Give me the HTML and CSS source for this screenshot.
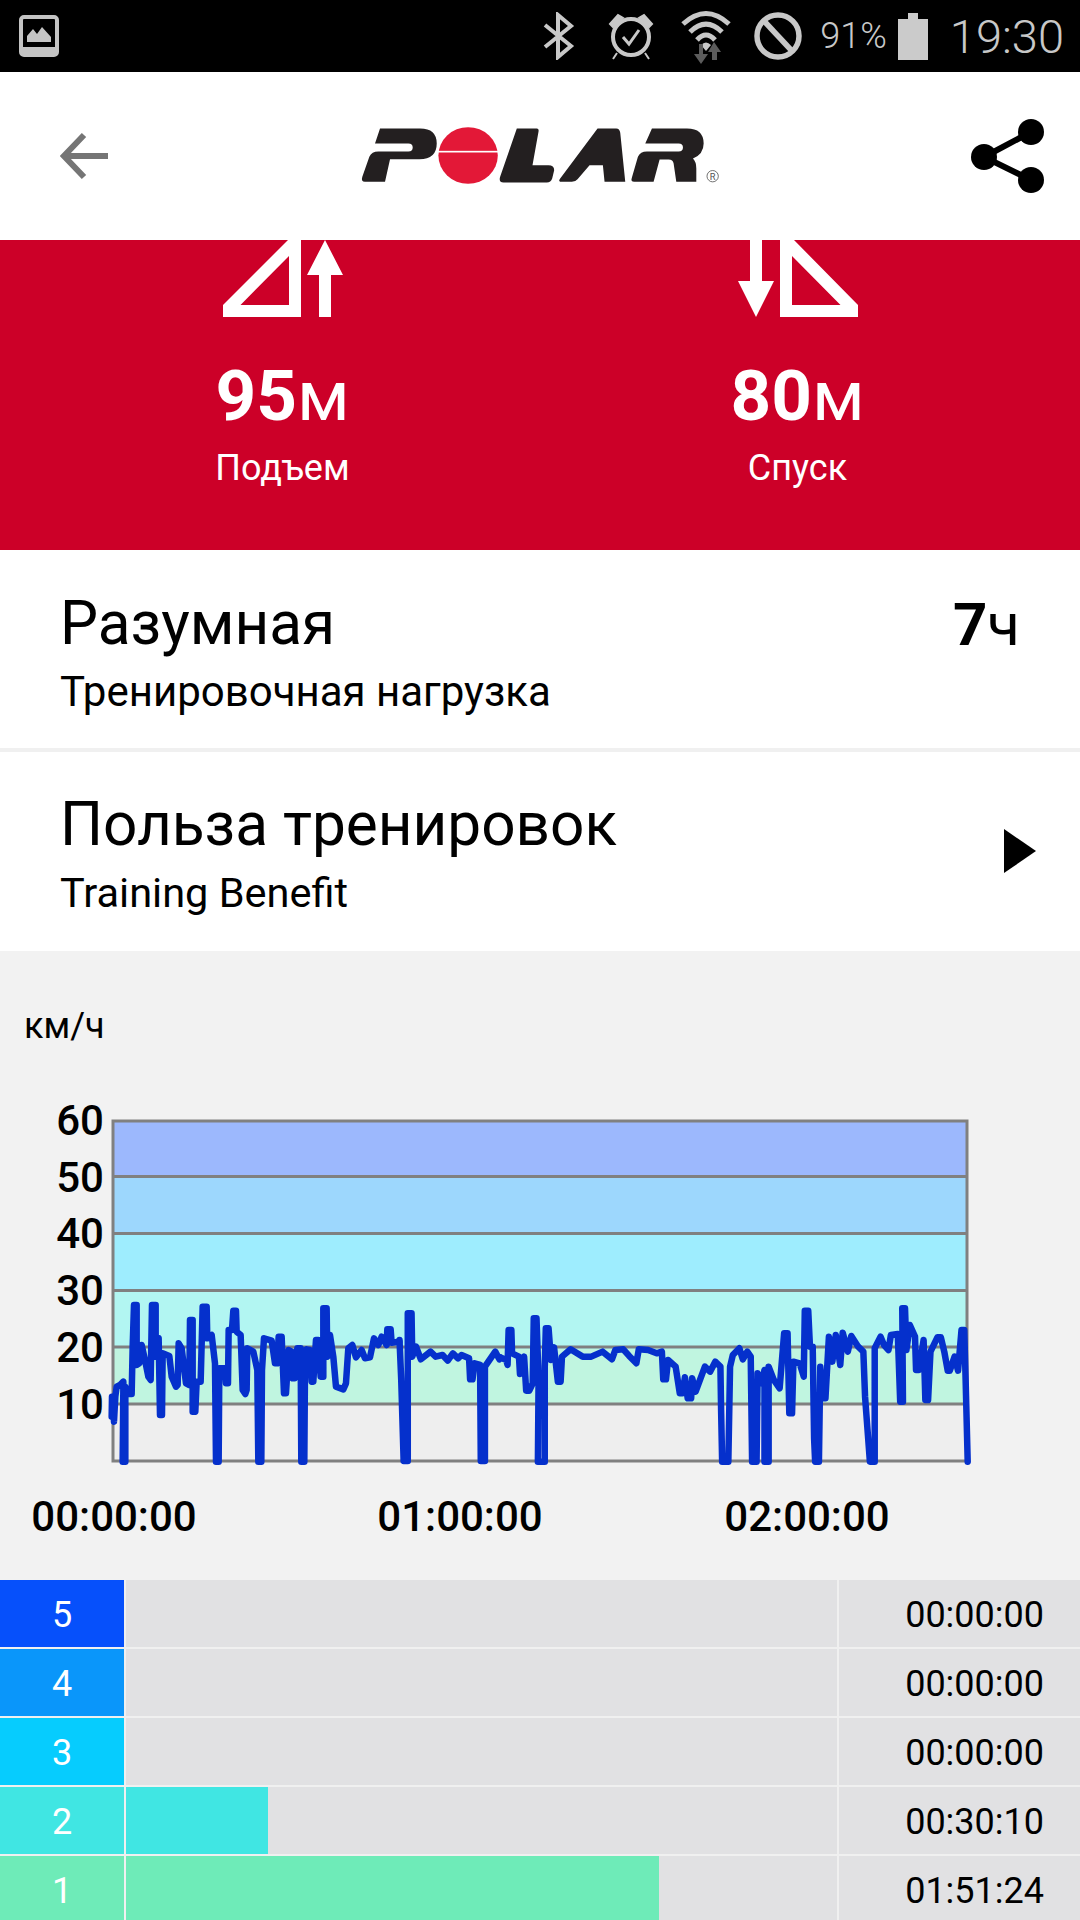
FILE: index.html
```html
<!DOCTYPE html>
<html lang="en">
<head>
  <meta charset="UTF-8" />
  <meta name="viewport" content="width=device-width, initial-scale=1.0"/>
  <title>Polar</title>
  <link rel="stylesheet" href="styles.css">
</head>
<body>
  <div class="statusbar">
    <svg class="ic-gallery" viewBox="0 0 40 42" width="40" height="42">
      <rect x="2" y="2" width="36" height="38" rx="3" fill="none" stroke="#c4c4c4" stroke-width="4"/>
      <rect x="2" y="32" width="36" height="8" fill="#c4c4c4"/>
      <path d="M8 27 V21 L14 14 L18 19 L23 12 L32 22 V27 Z" fill="#c4c4c4"/>
    </svg>
    <div class="status-right">
      <svg class="ic-bt" viewBox="0 0 32 48" width="32" height="48">
        <path d="M2 13 L28 34 L15 45 V3 L28 14 L2 35" fill="none" stroke="#c8c8c8" stroke-width="4"/>
      </svg>
      <svg class="ic-alarm" viewBox="0 0 46 48" width="46" height="48">
        <circle cx="23" cy="25" r="18" fill="none" stroke="#c8c8c8" stroke-width="4"/>
        <path d="M2 12 L10 3 L15 6 L5 15 Z M44 12 L36 3 L31 6 L41 15 Z M9 41 L5 47 M37 41 L41 47" fill="#c8c8c8" stroke="#c8c8c8" stroke-width="2"/>
        <path d="M15 25 L21 32 L31 18" fill="none" stroke="#c8c8c8" stroke-width="3"/>
      </svg>
      <svg class="ic-wifi" viewBox="0 0 50 54" width="50" height="54">
        <path d="M2 14 Q25 -7 48 14 M9 22 Q25 6 41 22 M16 30 Q25 20 34 30" fill="none" stroke="#c8c8c8" stroke-width="5"/>
        <path d="M20 35 L25 41 L30 35 Q25 30 20 35 Z" fill="#c8c8c8"/>
        <path d="M20 54 L13 44 H18 V34 H22 V44 H27 Z M33 32 L40 42 H36 V50 H31 V42 H27 Z" fill="#5c5c5c"/>
      </svg>
      <svg class="ic-block" viewBox="0 0 48 48" width="48" height="48">
        <circle cx="24" cy="24" r="21" fill="none" stroke="#c8c8c8" stroke-width="5.5"/>
        <path d="M10 9 L38 39" stroke="#c8c8c8" stroke-width="5.5"/>
      </svg>
      <span class="battery-pct">91%</span>
      <svg class="ic-battery" viewBox="0 0 30 47" width="30" height="47">
        <path d="M10 0 H20 V6 H30 V47 H0 V6 H10 Z" fill="#cbcbcb"/>
      </svg>
      <span class="clock">19:30</span>
    </div>
  </div>

  <div class="topbar">
    <svg class="ic-back" viewBox="0 0 48 48" width="48" height="48">
      <path d="M24 3 L4 24 L24 45 M4 24 H48" fill="none" stroke="#757575" stroke-width="6"/>
    </svg>
    <svg class="logo" viewBox="60 45 1085 185" width="362" height="62">
      <path class="logo-black" d="M120 55 H240 Q290 55 290 100 Q290 147 238 147 H150 L135 215 H75 Q62 215 67 200 L88 140 Q95 124 115 124 H205 Q218 124 218 112 Q218 100 205 100 H105 Z"/>
      <ellipse class="logo-red" cx="384" cy="136" rx="89" ry="85"/>
      <rect x="290" y="122" width="190" height="5" fill="#fff"/>
      <path class="logo-black" d="M530 55 H590 Q597 55 595 65 L577 165 H625 Q642 165 642 180 L636 205 Q632 217 620 217 H490 Q475 217 480 200 Z"/>
      <path class="logo-black" d="M772 55 H828 Q838 55 840 68 L855 215 H793 L788 165 H748 L712 207 Q705 215 695 215 H665 Q652 215 660 205 Z"/>
      <path class="logo-black" d="M935 55 H1040 Q1090 55 1090 100 Q1090 132 1058 145 Q1068 155 1068 175 V215 H1008 L1000 160 Q998 148 985 148 H958 L940 215 H882 Q870 215 875 202 L893 140 Q900 124 920 124 H1015 Q1028 124 1028 112 Q1028 100 1015 100 H915 Z"/>
      <circle cx="1117" cy="198" r="17" fill="none" stroke="#555" stroke-width="2.5"/>
      <text class="logo-reg" x="1117" y="208">R</text>
    </svg>
    <svg class="ic-share" viewBox="0 0 74 74" width="74" height="74">
      <path d="M60 13 L13 38 L60 61" fill="none" stroke="#000" stroke-width="6"/>
      <circle cx="60" cy="13" r="13"/>
      <circle cx="13" cy="38" r="13"/>
      <circle cx="60" cy="61" r="13"/>
    </svg>
  </div>

  <div class="climb">
    <div class="stat">
      <svg viewBox="222 240 120 77" width="120" height="77">
        <path fill-rule="evenodd" d="M287 240 H300 V317 H222 V305 Z M288 256 L239.500 305 H288 Z" fill="#fff"/>
        <path d="M324 240 L342 275 H330 V317 H318 V275 H306 Z" fill="#fff"/>
      </svg>
      <div class="stat-value"><b>95</b>м</div>
      <div class="stat-label">Подъем</div>
    </div>
    <div class="stat">
      <svg viewBox="738 240 120 77" width="120" height="77">
        <path d="M750 240 H762 V281 H774 L756 317 L738 281 H750 Z" fill="#fff"/>
        <path fill-rule="evenodd" d="M780 240 H794 L858 305 V317 H780 Z M792 256 V305 H840.500 Z" fill="#fff"/>
      </svg>
      <div class="stat-value"><b>80</b>м</div>
      <div class="stat-label">Спуск</div>
    </div>
  </div>

  <div class="row">
    <div>
      <div class="row-title">Разумная</div>
      <div class="row-sub">Тренировочная нагрузка</div>
    </div>
    <div class="row-hours"><b>7</b>ч</div>
  </div>
  <div class="row row-second">
    <div>
      <div class="row-title">Польза тренировок</div>
      <div class="row-sub">Training Benefit</div>
    </div>
    <svg class="ic-play" viewBox="0 0 32 44" width="32" height="44"><path d="M0 0 L32 22 L0 44 Z"/></svg>
  </div>

  <div class="chart">
    <div class="chart-unit">км/ч</div>
    <svg class="chart-svg" viewBox="0 1046 1080 533" width="1080" height="533">
      <rect x="113" y="1121" width="854" height="57" fill="#9cb8fd"/>
      <rect x="113" y="1178" width="854" height="57" fill="#9dd7fd"/>
      <rect x="113" y="1235" width="854" height="57" fill="#9eedfe"/>
      <rect x="113" y="1292" width="854" height="57" fill="#b2f6f2"/>
      <rect x="113" y="1349" width="854" height="56" fill="#c0f5e0"/>
      <rect x="113" y="1405" width="854" height="56" fill="#eeeeee"/>
      <path class="grid" d="M113 1121 H967 V1461 H113 Z M113 1176.500 H967 M113 1233.500 H967 M113 1290.500 H967 M113 1347 H967 M113 1404 H967"/>

      <g class="ticks-y">
        <text x="104" y="1135">60</text>
        <text x="104" y="1192">50</text>
        <text x="104" y="1248">40</text>
        <text x="104" y="1305">30</text>
        <text x="104" y="1362">20</text>
        <text x="104" y="1419">10</text>
      </g>
      <g class="ticks-x">
        <text x="114" y="1531">00:00:00</text>
        <text x="460" y="1531">01:00:00</text>
        <text x="807" y="1531">02:00:00</text>
      </g>

      <g transform="translate(100 1270) scale(.3333)">
        <polyline class="speed" points="35,440 36,380 40,385 42,455 46,380 50,350 60,345 70,335 70,360 68,575 76,575 76,350 85,372 95,372 98,230 102,105 110,105 110,285 118,280 125,225 135,270 145,320 152,330 156,105 167,105 167,260 176,205 180,435 186,435 188,250 208,258 215,320 228,350 233,345 236,220 245,235 258,340 268,345 270,150 278,150 278,425 286,425 290,335 302,335 308,110 320,110 322,205 335,195 345,280 348,575 356,575 358,295 375,295 378,340 384,340 386,180 396,180 400,122 408,122 410,185 422,195 428,360 436,372 440,360 442,235 460,245 472,300 475,575 484,575 486,300 492,205 515,212 525,280 532,280 536,200 545,200 552,370 558,370 566,240 575,245 578,325 584,325 592,235 602,235 604,575 613,575 615,300 620,238 630,240 635,335 640,335 648,210 655,210 662,320 670,320 670,115 680,115 682,260 690,195 700,260 708,350 730,358 738,340 745,235 757,225 768,262 785,240 795,265 810,262 822,205 835,225 845,200 860,225 862,178 872,178 875,218 898,215"/>
      </g>
      <g transform="translate(0 1100) scale(.3444 .3333)">
        <polyline class="speed" points="1160,720 1165,840 1172,1083 1184,1083 1184,640 1195,640 1197,770 1208,740 1222,778 1250,755 1265,770 1285,765 1300,782 1315,760 1330,775 1340,765 1362,775 1365,838 1372,838 1378,790 1394,795 1396,1083 1408,1083 1408,800 1438,755 1450,778 1452,772"/>
      </g>
      <g transform="translate(500 1100) scale(.3444 .3333)">
        <polyline class="speed" points="0,772 18,780 22,795 25,690 33,690 35,760 55,770 58,822 70,770 76,872 85,872 95,850 98,655 106,655 112,840 110,1085 130,1085 130,800 133,685 141,685 148,780 157,742 168,845 176,845 180,770 205,748 240,770 265,770 298,755 325,778 335,750 358,748 375,768 396,790 403,748 430,750 455,760 470,755 474,838 482,838 488,780 510,800 522,880 530,880 537,832 545,895 555,895 558,835 568,875 595,800 610,815 625,785 640,800 642,930 645,1085 663,1085 668,800 676,765 695,745 705,778 718,755 728,770 732,1085 745,1085 748,820 760,850 768,810 768,1085 780,1085 780,800 795,840 812,865 825,700 835,700 840,940 848,940 852,785 870,790 882,830 885,632 895,632 900,740 908,740 912,1015 915,1085 926,1085 930,800 936,895 945,895 955,710 965,785 975,705 988,795 995,698 1010,755 1020,708 1040,740 1055,755 1060,890 1074,1085 1088,1085 1088,745 1105,710 1115,735 1128,750 1135,705 1155,702 1162,905 1170,905 1168,625 1176,625 1180,750 1190,675 1205,710 1208,810 1216,810 1230,720 1235,900 1243,900 1250,755 1270,712 1280,712 1290,755 1300,812 1306,812 1320,770 1330,812 1340,690 1348,690 1352,840 1358,1085"/>
      </g>
    </svg>
  </div>

  <div class="zones">
    <div class="zone">
      <div class="zone-num z5">5</div>
      <div class="zone-track"></div>
      <div class="zone-time">00:00:00</div>
    </div>
    <div class="zone">
      <div class="zone-num z4">4</div>
      <div class="zone-track"></div>
      <div class="zone-time">00:00:00</div>
    </div>
    <div class="zone">
      <div class="zone-num z3">3</div>
      <div class="zone-track"></div>
      <div class="zone-time">00:00:00</div>
    </div>
    <div class="zone">
      <div class="zone-num z2">2</div>
      <div class="zone-track"><div class="zone-bar z2" style="width: 20%"></div></div>
      <div class="zone-time">00:30:10</div>
    </div>
    <div class="zone">
      <div class="zone-num z1">1</div>
      <div class="zone-track"><div class="zone-bar z1" style="width: 75%"></div></div>
      <div class="zone-time">01:51:24</div>
    </div>
  </div>
</body>
</html>
```

FILE: styles.css
```css
:root {
  --status: #c8c8c8;
  --red: #cc0028;
  --chart-bg: #f2f2f2;
  --track: #e1e1e3;
  --line: #f0f0f0;
}

html, body {
  margin: 0;
  height: 1920px;
  overflow: hidden;
}

body {
  font-family: Roboto, sans-serif;
  background: #fff;
  color: #000;
}

svg {
  display: block;
}

/* Status bar */
.statusbar {
  height: 72px;
  background: #000;
  display: flex;
  justify-content: space-between;
  align-items: center;
  padding: 0 16px 0 19px;
}

.status-right {
  display: flex;
  align-items: center;
  color: var(--status);
}

.ic-alarm { margin-left: 33px; }
.ic-wifi { margin-left: 27px; margin-top: 2px; }
.ic-block { margin-left: 23px; }

.battery-pct {
  margin-left: 18px;
  font-size: 36px;
  font-weight: 300;
}

.ic-battery { margin-left: 11px; }

.clock {
  margin-left: 22px;
  font-size: 47px;
  font-weight: 300;
}

/* Header */
.topbar {
  height: 168px;
  display: flex;
  justify-content: space-between;
  align-items: center;
  padding: 0 35px 0 60px;
}

.logo {
  margin-left: 2px;
}

.logo-black { fill: #231f20; }
.logo-red { fill: #e31837; }

.logo-reg {
  font-size: 28px;
  fill: #555;
  text-anchor: middle;
}

/* Climb / descent */
.climb {
  height: 310px;
  background: var(--red);
  color: #fff;
  display: grid;
  grid-template-columns: 1fr 1fr;
  padding: 0 25px;
  box-sizing: border-box;
}

.stat {
  display: flex;
  flex-direction: column;
  align-items: center;
}

.stat-value {
  font-size: 71px;
  line-height: 84px;
  margin-top: 37px;
}

.stat-label {
  font-size: 36px;
  line-height: 42px;
  margin-top: 9px;
}

/* Info rows */
.row {
  height: 198px;
  padding: 8px 60px 0;
  display: flex;
  justify-content: space-between;
  align-items: center;
  box-sizing: border-box;
}

.row-second {
  border-top: 4px solid var(--line);
  height: 203px;
  padding-top: 4px;
  padding-right: 44px;
}

.row-title {
  font-size: 60.300px;
  line-height: 66px;
}

.row-sub {
  font-size: 42px;
  line-height: 46px;
  margin-top: 12px;
}

.row-second .row-sub {
  font-size: 41.500px;
}

.row-hours {
  font-size: 60px;
  margin-top: -58px;
}

.ic-play {
  margin-top: -5px;
}

/* Speed chart */
.chart {
  height: 629px;
  background: var(--chart-bg);
  padding-top: 55px;
  box-sizing: border-box;
}

.chart-unit {
  font-size: 36px;
  line-height: 40px;
  padding-left: 24px;
}

.grid {
  fill: none;
  stroke: #808080;
  stroke-width: 3;
}

.ticks-y text,
.ticks-x text {
  font-size: 42px;
  font-weight: 500;
}

.ticks-y text { text-anchor: end; }
.ticks-x text { text-anchor: middle; }

.speed {
  fill: none;
  stroke: #0530cc;
  stroke-width: 6.500;
  stroke-linejoin: round;
  stroke-linecap: round;
  vector-effect: non-scaling-stroke;
}

/* Heart rate zones */
.zones {
  background: var(--line);
}

.zone {
  height: 67px;
  margin-bottom: 2px;
  display: flex;
  background: var(--track);
  font-size: 36px;
  line-height: 71px;
}

.zone-num {
  width: 124px;
  color: #fff;
  text-align: center;
  border-right: 2px solid var(--line);
}

.zone-track {
  flex: 1;
}

.zone-bar {
  height: 100%;
}

.zone-time {
  width: 205px;
  padding-right: 36px;
  text-align: right;
  border-left: 2px solid var(--line);
}

.z5 { background: #0650fb; }
.z4 { background: #0a96fa; }
.z3 { background: #06ccfe; }
.z2 { background: #40e6e3; }
.z1 { background: #6eebb8; }
```
